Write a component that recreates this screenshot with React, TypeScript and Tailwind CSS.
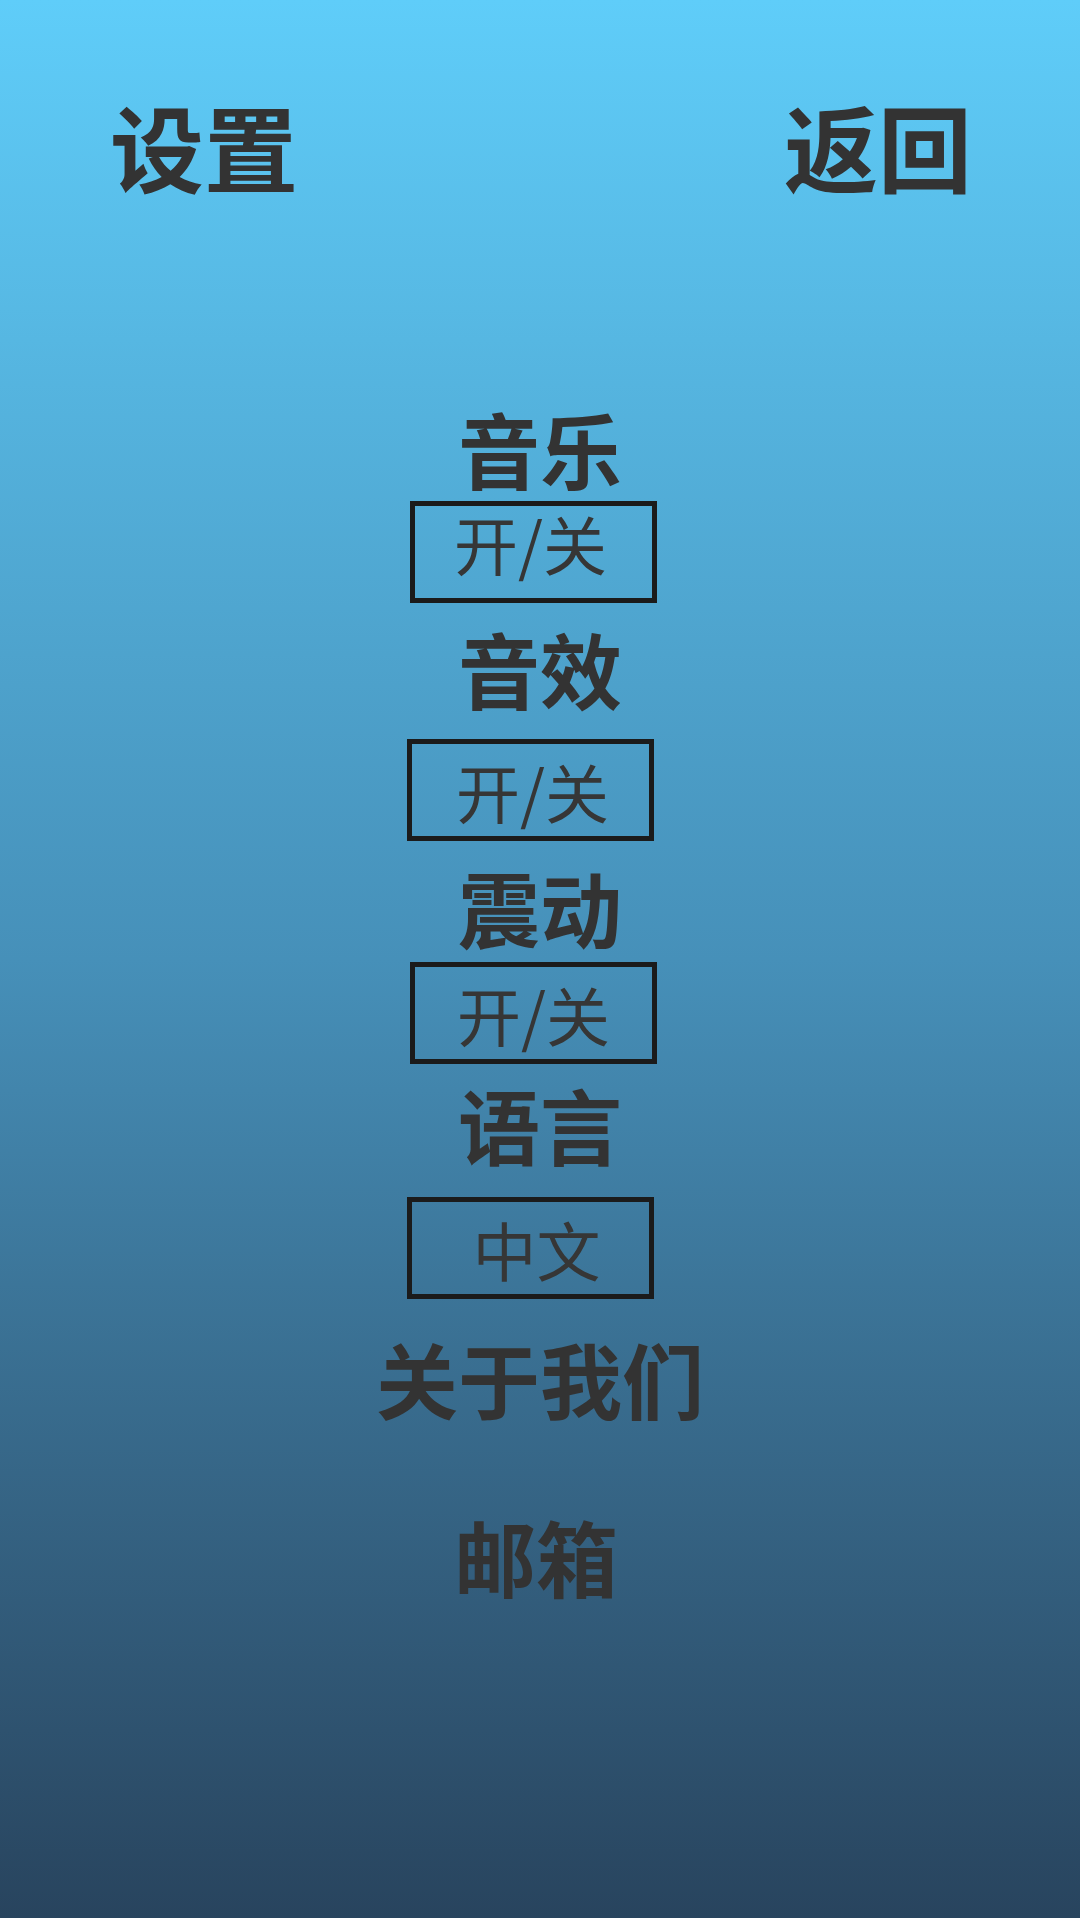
const cjk = { fontFamily: '"Noto Sans CJK SC", "Noto Sans", sans-serif' }

function Heading({ text, className = '' }: { text: string; className?: string }) {
  return (
    <div className={`text-[82px] leading-none font-bold text-[#333333] ${className}`}>{text}</div>
  )
}

function ToggleBox({ text, className = '', textClass = '' }: { text: string; className?: string; textClass?: string }) {
  return (
    <div
      className={`flex h-[102px] w-[247px] items-center justify-center border-[5px] border-[#1b1b1b] ${className}`}
    >
      <span className={`text-[64px] leading-none font-normal text-[#363636] ${textClass}`}>{text}</span>
    </div>
  )
}

export default function App() {
  return (
    <div
      className="flex min-h-[1918px] w-full flex-col bg-gradient-to-b from-[#5fcdf9] via-[#4690b9] to-[#28445e]"
      style={cjk}
    >
      {/* 顶部栏 */}
      <div className="flex items-center justify-between pt-[98px] pl-[110px] pr-[108px]">
        <div className="text-[94px] leading-none font-bold text-[#333333]">设置</div>
        <div className="text-[94px] leading-none font-bold text-[#333333]">返回</div>
      </div>

      {/* 设置项 */}
      <div className="mt-[215px] flex flex-col items-center">
        <Heading text="音乐" />
        <ToggleBox text="开/关" className="mt-[12px] mr-[13px]" textClass="pb-[20px] pr-[6px]" />
        <Heading text="音效" className="mt-[24px]" />
        <ToggleBox text="开/关" className="mt-[30px] mr-[19px]" textClass="pl-[4px]" />
        <Heading text="震动" className="mt-[25px]" />
        <ToggleBox text="开/关" className="mt-[14px] mr-[13px]" />
        <Heading text="语言" className="mt-[19px]" />
        <ToggleBox text="中文" className="mt-[32px] mr-[19px]" textClass="pl-[12px]" />
        <Heading text="关于我们" className="mt-[38px]" />
        <Heading text="邮箱" className="mt-[96px] mr-[8px]" />
      </div>
    </div>
  )
}
